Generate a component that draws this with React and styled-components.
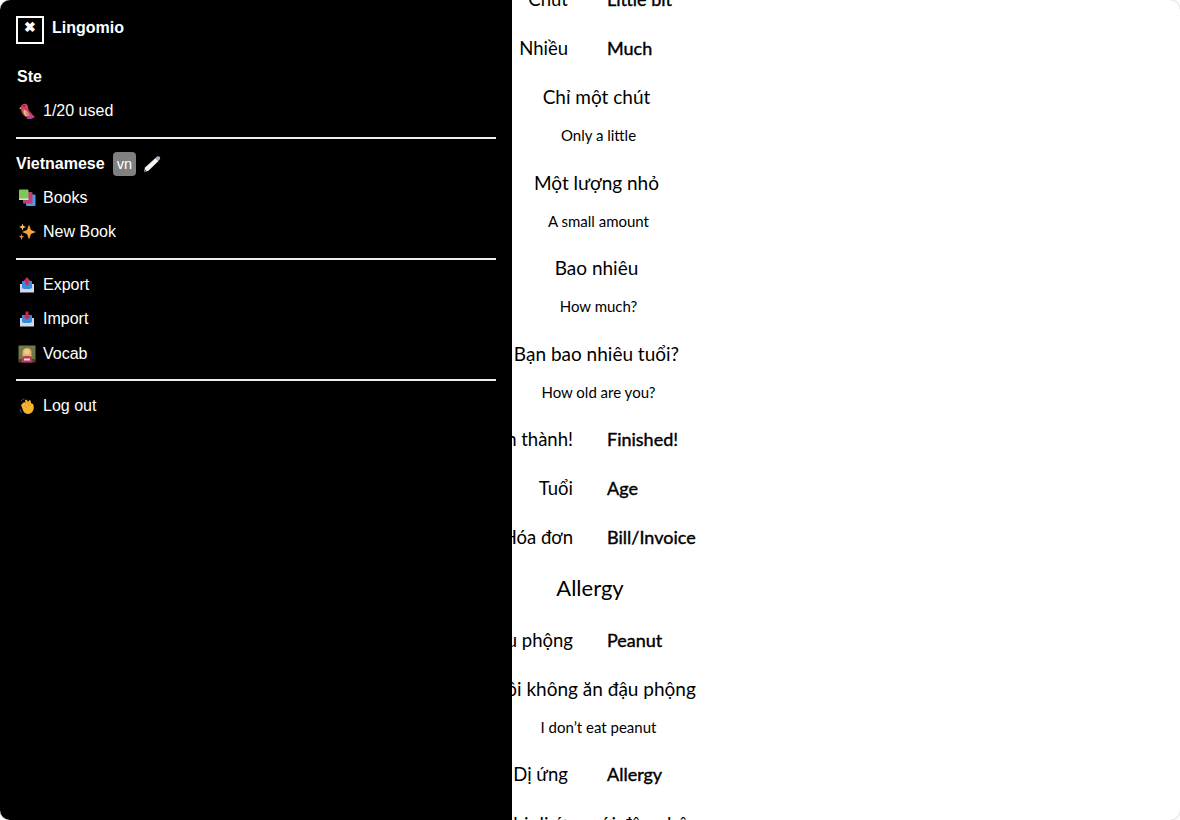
import React from "react";
import styled, { createGlobalStyle } from "styled-components";

const GlobalStyle = createGlobalStyle`
  html, body {
    margin: 0;
    height: 100%;
    background: #ffffff;
    overflow: hidden;
  }
`;

const Page = styled.div`
  position: relative;
  width: 1180px;
  height: 820px;
  overflow: hidden;
  border-radius: 10px;
  background: #ffffff;
  box-shadow: 0 0 2px rgba(0, 0, 0, 0.35);
`;

const Book = styled.div`
  margin-top: -26px;
  padding-left: 512px;
  font-family: "Lato", "Liberation Sans", sans-serif;
  color: #000000;
`;

const PairRow = styled.div`
  display: flex;
  align-items: center;
  height: 49px;
`;

const Target = styled.div`
  width: ${(p) => (p.$narrow ? 56 : 61)}px;
  flex-shrink: 0;
  display: flex;
  justify-content: flex-end;
  white-space: nowrap;
  font-size: 18.5px;
`;

const Native = styled.div`
  margin-left: ${(p) => (p.$narrow ? 39 : 34)}px;
  white-space: nowrap;
  font-size: 18px;
  -webkit-text-stroke: 0.4px #000000;
`;

const Sentence = styled.div`
  display: flex;
  flex-direction: column;
  align-items: center;
  width: 169px;
  padding-top: 6px;
  white-space: nowrap;
`;

const SentenceText = styled.div`
  height: 38px;
  line-height: 38px;
  font-size: 19px;
`;

const SentenceNative = styled.div`
  height: 41.5px;
  line-height: 38px;
  font-size: 15px;
  margin-left: 4px;
`;

const SectionTitle = styled.div`
  width: 156px;
  height: 54px;
  line-height: 54px;
  text-align: center;
  font-size: 22px;
`;

const Drawer = styled.aside`
  position: absolute;
  top: 0;
  left: 0;
  bottom: 0;
  width: 480px;
  padding: 16px;
  background: #000000;
  color: #ffffff;
  font-family: "Liberation Sans", Arial, sans-serif;
  font-size: 16px;
`;

const Brand = styled.div`
  display: flex;
  align-items: flex-start;
  gap: 8px;
  height: 43px;
  font-weight: 700;
`;

const CloseButton = styled.div`
  box-sizing: border-box;
  width: 28px;
  height: 28px;
  display: flex;
  justify-content: center;
  padding-top: 1px;
  border: 2px solid #ffffff;
  font-size: 14px;
  line-height: 16px;
`;

const BrandName = styled.div`
  line-height: 23px;
`;

const UserName = styled.div`
  height: 34px;
  line-height: 35px;
  font-weight: 700;
  padding-left: 1px;
`;

const MenuItem = styled.div`
  box-sizing: border-box;
  display: flex;
  align-items: center;
  height: 34.5px;
  padding: 2px 0 0 2px;
  gap: 7px;
`;

const Divider = styled.hr`
  margin: 9px 0 7px;
  height: 2px;
  border: 0;
  background: #eeeeee;
`;

const LanguageRow = styled.div`
  box-sizing: border-box;
  display: flex;
  align-items: center;
  height: 34px;
  padding-top: 2px;
  font-weight: 700;
`;

const LanguageCode = styled.span`
  margin-left: 8px;
  padding: 0 4px;
  height: 24px;
  line-height: 24px;
  border-radius: 4px;
  background: #808080;
  font-weight: 400;
  font-size: 14.5px;
`;

const IconBox = styled.svg`
  width: 18px;
  height: 18px;
  flex-shrink: 0;
  margin-left: ${(p) => p.$offset || 0}px;
`;

const BirdIcon = () => (
  <IconBox viewBox="0 0 18 18">
    <path d="M1 6.5 L3.4 4.6 L3.6 7.4 Z" fill="#f0a030" />
    <path d="M3 4.5 C4.2 1 9 0.8 9.8 4 C10 6.5 10.5 8.6 12.5 10.5 L17 15.2 L11 15.4 C6 15.6 3 11 3 6.5 Z" fill="#d93a6e" />
    <path d="M5.6 7.4 C8 7.8 10 10.4 11.6 13.6 L8 14.2 C6 12.6 5.2 10 5.6 7.4 Z" fill="#f2c14e" />
    <path d="M7.6 10 C9 10.6 10.2 12 11.2 13.6 L9 14 C8.2 12.8 7.8 11.4 7.6 10 Z" fill="#5a9fd8" />
    <path d="M9.5 15 L17 15.2 L13 17 L8.5 16.8 Z" fill="#8d5bb5" />
    <circle cx="6" cy="4" r="0.8" fill="#2a1a20" />
  </IconBox>
);

const BooksIcon = () => (
  <IconBox viewBox="0 0 18 18">
    <rect x="8" y="5.5" width="9.5" height="11.5" rx="1" fill="#4a9fe0" />
    <rect x="5" y="3" width="9.5" height="11.5" rx="1" fill="#c23a78" />
    <rect x="1" y="0.5" width="9.5" height="10.5" rx="1" fill="#7cc65a" />
    <rect x="1" y="9.5" width="9.5" height="1.5" fill="#d8e8c8" />
  </IconBox>
);

const SparkleIcon = () => (
  <IconBox viewBox="0 0 18 18">
    <path d="M11 1.5 L13 7 L18 9 L13 11 L11 16.5 L9 11 L4 9 L9 7 Z" fill="#f4a33c" />
    <path d="M4.5 0.5 L5.4 3.1 L8 4 L5.4 4.9 L4.5 7.5 L3.6 4.9 L1 4 L3.6 3.1 Z" fill="#f7c66a" />
    <path d="M3.5 11 L4.3 13 L6.2 13.8 L4.3 14.6 L3.5 17 L2.7 14.6 L0.8 13.8 L2.7 13 Z" fill="#f08a30" />
  </IconBox>
);

const TrayIcon = ({ up }) => (
  <IconBox viewBox="0 0 18 18">
    <path d="M2 8 L16 8 L16 16.5 L2 16.5 Z" fill="#d9d6ea" />
    <path d="M4 5 L14 5 L14 12 L12 13 L6 13 L4 12 Z" fill="#2f8fdc" />
    {up ? (
      <path d="M9 1 L12.5 5 L10.5 5 L10.5 9 L7.5 9 L7.5 5 L5.5 5 Z" fill="#c8285a" />
    ) : (
      <path d="M9 10 L12.5 6 L10.5 6 L10.5 1.5 L7.5 1.5 L7.5 6 L5.5 6 Z" fill="#c8285a" />
    )}
  </IconBox>
);

const VocabIcon = () => (
  <IconBox viewBox="0 0 18 18">
    <rect x="0.5" y="0.5" width="17" height="15" fill="#6f7a4a" />
    <rect x="0.5" y="14" width="17" height="3.5" fill="#5a3a28" />
    <path d="M4.5 7 C4.5 1.8 13.5 1.8 13.5 7 L13.5 11.5 L4.5 11.5 Z" fill="#e0b45a" />
    <circle cx="9" cy="6.8" r="2.8" fill="#f0c8a0" />
    <path d="M3.5 17.5 L4 12.5 C6 10.5 12 10.5 14 12.5 L14.5 17.5 Z" fill="#b83a5a" />
    <rect x="6" y="13.5" width="6" height="2" fill="#f0d8d8" />
  </IconBox>
);

const WaveIcon = () => (
  <IconBox viewBox="0 0 18 18">
    <path d="M3 8 L6 5 L7.5 6 L7 3.5 L8.8 2.6 L10 5 L11.5 3 L13 4 L12.8 6 L15 7 C16.5 10 16 14 13 16 C10 17.8 7 16.8 5.5 14.5 Z" fill="#f5b42e" />
    <path d="M6 8 L9 11 M9 5.5 L11.5 9" stroke="#d68a1a" strokeWidth="0.7" fill="none" />
    <path d="M2 12 C2.3 13.6 3 14.8 4.2 15.8 M6.5 2 C5.2 2 4 2.6 3.2 3.8" stroke="#2c5f9e" strokeWidth="1" fill="none" />
  </IconBox>
);

const PenIcon = () => (
  <IconBox viewBox="0 0 18 18" $offset={7}>
    <path d="M1 17 L2 12.5 L12.5 3 L15.5 6 L5.5 15.8 Z" fill="#f4f4f4" />
    <path d="M1 17 L2 14.5 L3.5 16 Z" fill="#2c3e66" />
    <path d="M12.5 3 L14 1.6 C15 0.9 16 1 16.8 2 C17.4 2.9 17.3 3.8 16.6 4.6 L15.5 6 Z" fill="#a8b4c8" />
  </IconBox>
);

const items = [
  { type: "pair", vi: "Chút", en: "Little bit", narrow: true },
  { type: "pair", vi: "Nhiều", en: "Much", narrow: true },
  { type: "sentence", vi: "Chỉ một chút", en: "Only a little" },
  { type: "sentence", vi: "Một lượng nhỏ", en: "A small amount" },
  { type: "sentence", vi: "Bao nhiêu", en: "How much?" },
  { type: "sentence", vi: "Bạn bao nhiêu tuổi?", en: "How old are you?" },
  { type: "pair", vi: "Hoàn thành!", en: "Finished!" },
  { type: "pair", vi: "Tuổi", en: "Age" },
  { type: "pair", vi: "Hóa đơn", en: "Bill/Invoice" },
  { type: "title", vi: "Allergy" },
  { type: "pair", vi: "Đậu phộng", en: "Peanut" },
  { type: "sentence", vi: "Tôi không ăn đậu phộng", en: "I don’t eat peanut" },
  { type: "pair", vi: "Dị ứng", en: "Allergy", narrow: true },
  { type: "sentence", vi: "Tôi bị dị ứng với đậu phộng", en: "I am allergic to peanut" },
];

const App = () => {
  return (
    <Page>
      <GlobalStyle />
      <Book>
        {items.map((item) => {
          if (item.type === "title") {
            return <SectionTitle key={item.vi}>{item.vi}</SectionTitle>;
          }
          if (item.type === "sentence") {
            return (
              <Sentence key={item.vi}>
                <SentenceText>{item.vi}</SentenceText>
                <SentenceNative>{item.en}</SentenceNative>
              </Sentence>
            );
          }
          return (
            <PairRow key={item.vi}>
              <Target $narrow={item.narrow}>{item.vi}</Target>
              <Native $narrow={item.narrow}>{item.en}</Native>
            </PairRow>
          );
        })}
      </Book>
      <Drawer>
        <Brand>
          <CloseButton>✖</CloseButton>
          <BrandName>Lingomio</BrandName>
        </Brand>
        <UserName>Ste</UserName>
        <MenuItem>
          <BirdIcon />1/20 used
        </MenuItem>
        <Divider />
        <LanguageRow>
          Vietnamese
          <LanguageCode>vn</LanguageCode>
          <PenIcon />
        </LanguageRow>
        <MenuItem>
          <BooksIcon />Books
        </MenuItem>
        <MenuItem>
          <SparkleIcon />New Book
        </MenuItem>
        <Divider />
        <MenuItem>
          <TrayIcon up />Export
        </MenuItem>
        <MenuItem>
          <TrayIcon />Import
        </MenuItem>
        <MenuItem>
          <VocabIcon />Vocab
        </MenuItem>
        <Divider />
        <MenuItem>
          <WaveIcon />Log out
        </MenuItem>
      </Drawer>
    </Page>
  );
};

export default App;
